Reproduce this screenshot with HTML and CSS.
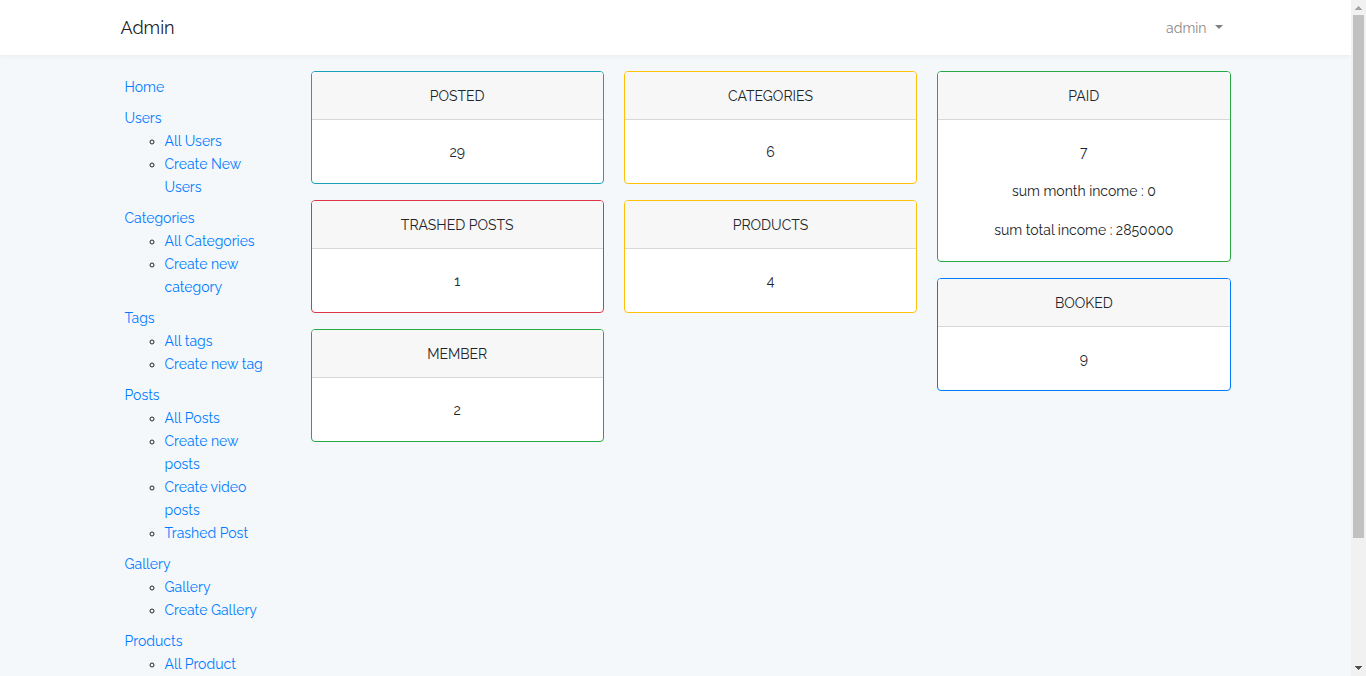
FILE: index.html
```html
<!DOCTYPE html>
<html lang="en">
<head>
<meta charset="utf-8">
<title>Admin</title>
<link rel="stylesheet" href="styles.css">
</head>
<body>
<div class="page">
  <header class="navbar">
    <div class="container navbar-inner">
      <a class="brand" href="#">Admin</a>
      <button class="user-menu" type="button">admin <span class="caret"></span></button>
    </div>
  </header>
  <div class="container layout">
    <nav class="sidebar">
      <ul class="menu">
        <li><a href="#">Home</a></li>
        <li><a href="#">Users</a>
          <ul><li><a href="#">All Users</a></li><li><a href="#">Create New<br>Users</a></li></ul></li>
        <li><a href="#">Categories</a>
          <ul><li><a href="#">All Categories</a></li><li><a href="#">Create new<br>category</a></li></ul></li>
        <li><a href="#">Tags</a>
          <ul><li><a href="#">All tags</a></li><li><a href="#">Create new tag</a></li></ul></li>
        <li><a href="#">Posts</a>
          <ul><li><a href="#">All Posts</a></li><li><a href="#">Create new<br>posts</a></li><li><a href="#">Create video<br>posts</a></li><li><a href="#">Trashed Post</a></li></ul></li>
        <li><a href="#">Gallery</a>
          <ul><li><a href="#">Gallery</a></li><li><a href="#">Create Gallery</a></li></ul></li>
        <li><a href="#">Products</a>
          <ul><li><a href="#">All Product</a></li></ul></li>
      </ul>
    </nav>
    <main class="cards">
      <div class="card-column">
        <section class="card info"><h2>POSTED</h2><div class="card-body"><p>29</p></div></section>
        <section class="card danger"><h2>TRASHED POSTS</h2><div class="card-body"><p>1</p></div></section>
        <section class="card success"><h2>MEMBER</h2><div class="card-body"><p>2</p></div></section>
      </div>
      <div class="card-column">
        <section class="card warning"><h2>CATEGORIES</h2><div class="card-body"><p>6</p></div></section>
        <section class="card warning"><h2>PRODUCTS</h2><div class="card-body"><p>4</p></div></section>
      </div>
      <div class="card-column">
        <section class="card success"><h2>PAID</h2><div class="card-body"><p>7</p><p>sum month income : 0</p><p>sum total income : 2850000</p></div></section>
        <section class="card primary"><h2>BOOKED</h2><div class="card-body"><p>9</p></div></section>
      </div>
    </main>
  </div>
</div>
<div class="scrollbar" aria-hidden="true">
  <svg width="15" height="15" viewBox="0 0 15 15" shape-rendering="crispEdges"><path d="M7 6h1v1h1v1h1v1h1v1H4V9h1V8h1V7h1z" fill="#a3a3a3"/></svg>
  <div class="track"><div class="thumb"></div></div>
  <svg width="15" height="15" viewBox="0 0 15 15" shape-rendering="crispEdges"><path d="M4 5h7v1h-1v1H9v1H8v1H7V8H6V7H5V6H4z" fill="#505050"/></svg>
</div>
</body>
</html>
```
FILE: styles.css
```css
* {
  box-sizing: border-box;
}

body {
  margin: 0;
  height: 100vh;
  display: flex;
  overflow: hidden;
  background: #f5f8fa;
  color: #212529;
  font-family: Raleway, Lato, sans-serif;
  font-size: 14px;
  line-height: 23px;
}

a {
  color: #007bff;
  text-decoration: none;
}

.page {
  flex: 1;
  min-width: 0;
  overflow: hidden;
  background: #f4f8fb;
}

.container {
  max-width: 1140px;
  margin: 0 auto;
  padding: 0 15px;
}

.navbar {
  background: #fff;
  box-shadow: 0 2px 4px rgba(0, 0, 0, 0.04);
}

.navbar-inner {
  display: flex;
  align-items: center;
  justify-content: space-between;
  min-height: 55px;
}

.brand {
  color: rgba(0, 0, 0, 0.9);
  font-size: 18px;
  line-height: 29px;
}

.user-menu {
  display: flex;
  align-items: center;
  gap: 8px;
  padding: 9px 8px 7px;
  border: 0;
  background: none;
  color: rgba(0, 0, 0, 0.5);
  font: inherit;
}

.caret {
  margin-bottom: 4px;
  border-top: 4px solid;
  border-left: 4px solid transparent;
  border-right: 4px solid transparent;
}

.layout {
  display: flex;
  gap: 30px;
  padding-top: 16px;
}

.sidebar {
  flex: 0 0 160px;
}

.menu {
  margin: 0;
  padding: 0;
  list-style: none;
}

.menu > li {
  padding: 5px 4px 3px;
}

.menu ul {
  margin: 0;
  padding-left: 40px;
  list-style: circle;
}

.cards {
  flex: 1;
  display: grid;
  grid-template-columns: repeat(3, 1fr);
  align-items: start;
  gap: 20px;
}

.card-column {
  display: grid;
  gap: 16px;
}

.card {
  border: 1px solid;
  border-radius: 4px;
  overflow: hidden;
  background: #fff;
  text-align: center;
}

.card h2 {
  margin: 0;
  padding: 13px 20px 11px;
  border-bottom: 1px solid #d8d8d8;
  background: #f7f7f7;
  color: #212529;
  font-size: 14px;
  font-weight: 400;
}

.card-body {
  display: grid;
  gap: 16px;
  padding: 21px 20px 19px;
}

.card p {
  margin: 0;
}

.info {
  border-color: #17a2b8;
}

.danger {
  border-color: #dc3545;
}

.success {
  border-color: #28a745;
}

.warning {
  border-color: #ffc107;
}

.primary {
  border-color: #007bff;
}

.scrollbar {
  flex: 0 0 15px;
  display: flex;
  flex-direction: column;
  background: #f1f1f1;
}

.scrollbar svg {
  display: block;
}

.track {
  flex: 1;
  padding: 0 2px;
}

.thumb {
  height: 81%;
  background: #c1c1c1;
}
```
